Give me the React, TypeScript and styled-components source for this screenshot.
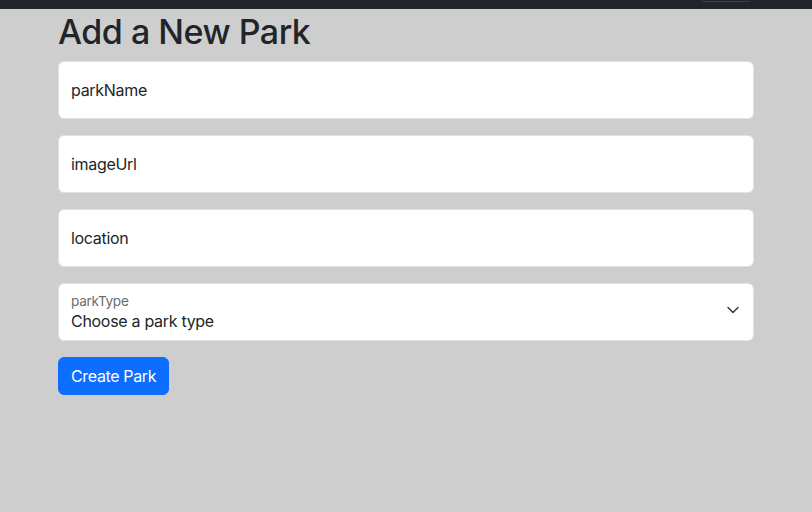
import React from "react";
import styled, { createGlobalStyle } from "styled-components";

const Global = createGlobalStyle`
  html, body { margin: 0; padding: 0; background: #cecece; }
  body {
    font-family: Inter, "Noto Sans", "Liberation Sans", sans-serif;
    color: #212529;
    font-size: 16px;
    line-height: 1.5;
    letter-spacing: -0.3px;
  }
  * { box-sizing: border-box; }
`;

const Page = styled.div`
  min-height: 512px;
  background: #cecece;
`;

const NavBar = styled.div`
  height: 9px;
  background: #212529;
  overflow: hidden;
  display: flex;
  justify-content: flex-end;
  align-items: flex-end;
  padding-right: 61px;
`;

const NavButton = styled.div`
  width: 50px;
  height: 2px;
  margin-bottom: 7px;
  border-bottom: 1px solid #3a3f45;
  border-radius: 0 0 4px 4px;
`;

const Container = styled.div`
  max-width: 720px;
  margin: 0 auto;
  padding: 0 12px;
`;

const Title = styled.h1`
  margin: 3px 0 8px;
  font-size: 34px;
  font-weight: 500;
  line-height: 1.2;
  letter-spacing: -0.5px;
`;

const Form = styled.form`
  display: flex;
  flex-direction: column;
  gap: 16px;
  align-items: flex-start;
`;

const Field = styled.div`
  position: relative;
  width: 100%;
  height: 58px;
  background: #fff;
  border: 1px solid #dee2e6;
  border-radius: 6px;
  display: flex;
  align-items: center;
  padding: 0 12px;
`;

const FieldText = styled.span`
  font-size: 16px;
  color: #212529;
`;

const SelectBox = styled(Field)`
  flex-direction: column;
  align-items: flex-start;
  justify-content: flex-start;
  padding: 9px 12px 0;
`;

const SmallLabel = styled.span`
  font-size: 13.6px;
  line-height: 1.2;
  color: #6b6e71;
`;

const SelectValue = styled.span`
  font-size: 16px;
  line-height: 1.5;
  color: #212529;
`;

const Chevron = styled.svg`
  position: absolute;
  right: 12px;
  top: 18px;
`;

const Button = styled.button`
  height: 38px;
  padding: 0 12px;
  background: #0d6efd;
  color: #fff;
  border: 1px solid #0d6efd;
  border-radius: 6px;
  font-family: inherit;
  font-size: 16px;
  line-height: 1.5;
  letter-spacing: -0.35px;
  cursor: pointer;
`;

export default function App() {
  return (
    <Page>
      <Global />
      <NavBar>
        <NavButton />
      </NavBar>
      <Container>
        <Title>Add a New Park</Title>
        <Form onSubmit={(e) => e.preventDefault()}>
          <Field><FieldText>parkName</FieldText></Field>
          <Field><FieldText>imageUrl</FieldText></Field>
          <Field><FieldText>location</FieldText></Field>
          <SelectBox>
            <SmallLabel>parkType</SmallLabel>
            <SelectValue>Choose a park type</SelectValue>
            <Chevron width="16" height="16" viewBox="0 0 16 16" fill="none">
              <path d="M3 5.5l5 5 5-5" stroke="#343a40" strokeWidth="1.5" strokeLinecap="round" strokeLinejoin="round" />
            </Chevron>
          </SelectBox>
          <Button type="submit">Create Park</Button>
        </Form>
      </Container>
    </Page>
  );
}
